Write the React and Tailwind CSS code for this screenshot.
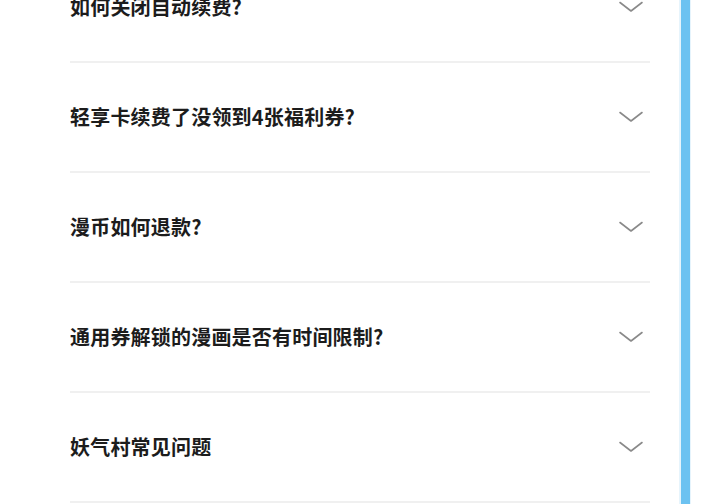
const questions = [
  '如何关闭自动续费?',
  '轻享卡续费了没领到4张福利券?',
  '漫币如何退款?',
  '通用券解锁的漫画是否有时间限制?',
  '妖气村常见问题',
]

function Chevron() {
  return (
    <svg width="26" height="12" viewBox="0 0 26 12" fill="none">
      <path d="M2 1.5 L13 10 L24 1.5" stroke="#8a8a8a" strokeWidth="1.6" strokeLinecap="round" strokeLinejoin="round" />
    </svg>
  )
}

export default function App() {
  return (
    <div
      className="w-[720px] h-[504px] overflow-hidden bg-white flex"
      style={{ fontFamily: '"Noto Sans CJK SC", "Noto Sans", sans-serif' }}
    >
      <div className="flex-1 overflow-hidden">
        <div className="ml-[70px] w-[580px] -mt-[47px]">
          {questions.map((q) => (
            <div
              key={q}
              className="h-[110px] flex items-center justify-between pr-[6px] border-b-2 border-[#f0f0f0]"
            >
              <span className="text-[20px] font-bold text-[#1c1c1c] leading-none tracking-[0.2px]">{q}</span>
              <Chevron />
            </div>
          ))}
        </div>
      </div>
      <div className="w-[12px] flex justify-center bg-[#e6f4fc]">
        <div className="w-[9px] h-full bg-[#6cc2f1]" />
      </div>
      <div className="w-[29px]" />
    </div>
  )
}
